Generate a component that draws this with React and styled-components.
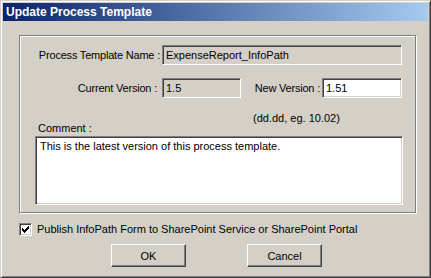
import React from 'react';
import styled, { createGlobalStyle } from 'styled-components';

const GlobalStyle = createGlobalStyle`
  html, body {
    margin: 0;
    padding: 0;
    background: #d4d0c8;
  }
  * { box-sizing: border-box; }
`;

const Window = styled.div`
  width: 431px;
  height: 278px;
  background: #d4d0c8;
  border-top: 1px solid #d4d0c8;
  border-left: 1px solid #d4d0c8;
  border-right: 1px solid #404040;
  border-bottom: 1px solid #404040;
  box-shadow: inset 1px 1px #fff, inset -1px -1px #808080;
  padding: 2px;
  display: flex;
  flex-direction: column;
  font-family: 'Liberation Sans', Arial, sans-serif;
  font-size: 11px;
  color: #000;
`;

const TitleBar = styled.div`
  height: 18px;
  background: linear-gradient(to right, #0a246a, #a6caf0);
  color: #fff;
  font-weight: 700;
  font-size: 12px;
  line-height: 18px;
  padding-left: 3px;
  display: flex;
  align-items: center;
`;

const Body = styled.div`
  flex: 1;
  display: flex;
  flex-direction: column;
  padding: 14px 0 0 16px;
`;

const Group = styled.div`
  width: 397px;
  height: 178px;
  border: 1px solid #808080;
  box-shadow: inset 1px 1px #fff, 1px 1px #fff;
  padding-top: 9px;
  display: flex;
  flex-direction: column;
`;

const Row = styled.div`
  display: flex;
  align-items: center;
  margin-top: ${p => p.$top || 0}px;
`;

const Label = styled.span`
  width: ${p => p.$width}px;
  text-align: right;
  padding-right: ${p => p.$pad || 0}px;
  white-space: nowrap;
  letter-spacing: -0.2px;
`;

const Field = styled.div`
  width: ${p => p.$width}px;
  height: ${p => p.$height || 20}px;
  background: ${p => (p.$disabled ? '#d4d0c8' : '#fff')};
  border-top: 1px solid #808080;
  border-left: 1px solid #808080;
  border-right: 1px solid #fff;
  border-bottom: 1px solid #fff;
  box-shadow: inset 1px 1px #404040, inset -1px -1px #d4d0c8;
  padding: 3px 3px 0 3px;
  line-height: 13px;
  white-space: nowrap;
  overflow: hidden;
`;

const Hint = styled.div`
  padding-left: 233px;
  margin-top: 14px;
  line-height: 13px;
`;

const CommentLabel = styled.div`
  padding-left: 18px;
  margin-top: -3px;
  line-height: 13px;
`;

const TextBox = styled(Field)`
  margin: 1px 0 0 15px;
  padding: 3px 4px;
`;

const CheckRow = styled.label`
  display: flex;
  align-items: center;
  gap: 5px;
  margin-top: 9px;
  height: 14px;
`;

const CheckBox = styled.span`
  width: 13px;
  height: 13px;
  background: #fff;
  border-top: 1px solid #808080;
  border-left: 1px solid #808080;
  border-right: 1px solid #fff;
  border-bottom: 1px solid #fff;
  box-shadow: inset 1px 1px #404040, inset -1px -1px #d4d0c8;
  display: flex;
  align-items: center;
  justify-content: center;
`;

const Buttons = styled.div`
  display: flex;
  margin-top: 8px;
  padding-left: 92px;
  gap: 61px;
`;

const Button = styled.button`
  width: 75px;
  height: 23px;
  background: #d4d0c8;
  font-family: inherit;
  font-size: 11px;
  color: #000;
  border-top: 1px solid #fff;
  border-left: 1px solid #fff;
  border-right: 1px solid #404040;
  border-bottom: 1px solid #404040;
  box-shadow: inset -1px -1px #808080;
  padding: 0;
`;

export default function App() {
  return (
    <>
      <GlobalStyle />
      <Window>
        <TitleBar>Update Process Template</TitleBar>
        <Body>
          <Group>
            <Row>
              <Label $width={142} $pad={2}>Process Template Name :</Label>
              <Field $width={240} $disabled>ExpenseReport_InfoPath</Field>
            </Row>
            <Row $top={13}>
              <Label $width={142} $pad={5}>Current Version :</Label>
              <Field $width={79} $disabled>1.5</Field>
              <Label $width={81} $pad={2}>New Version :</Label>
              <Field $width={80}>1.51</Field>
            </Row>
            <Hint>(dd.dd, eg. 10.02)</Hint>
            <CommentLabel>Comment :</CommentLabel>
            <TextBox $width={368} $height={69}>
              This is the latest version of this process template.
            </TextBox>
          </Group>
          <CheckRow>
            <CheckBox>
              <svg width="7" height="7" viewBox="0 0 7 7">
                <path d="M0 2h1v1h1v1h1V3h1V2h1V1h1V0h1v3H6v1H5v1H4v1H3v1H2V6H1V5H0z" fill="#000" />
              </svg>
            </CheckBox>
            Publish InfoPath Form to SharePoint Service or SharePoint Portal
          </CheckRow>
          <Buttons>
            <Button>OK</Button>
            <Button>Cancel</Button>
          </Buttons>
        </Body>
      </Window>
    </>
  );
}
